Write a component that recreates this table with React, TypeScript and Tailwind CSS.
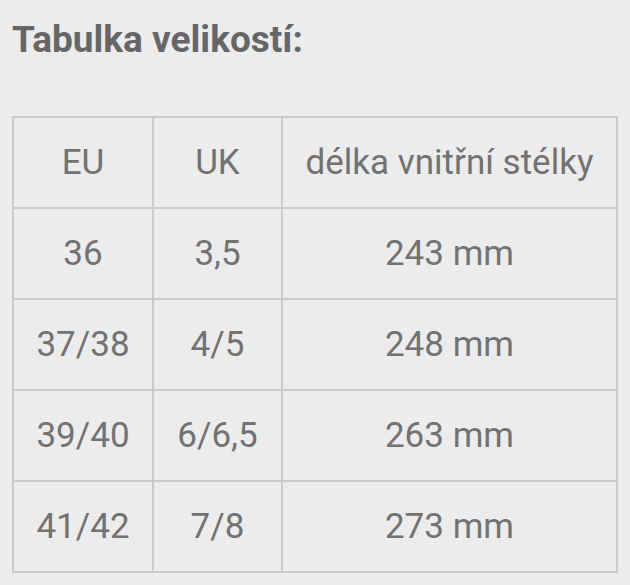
const ROWS: [string, string, string][] = [
  ["36", "3,5", "243 mm"],
  ["37/38", "4/5", "248 mm"],
  ["39/40", "6/6,5", "263 mm"],
  ["41/42", "7/8", "273 mm"],
];

const CELL = "border-2 border-[#cbcbcb] text-center align-middle h-[91px] p-0 font-normal";

export default function App() {
  return (
    <div className="w-[630px] h-[585px] bg-[#ececec] pl-[12px] pt-[18px] font-['Roboto',sans-serif] text-[#727272]">
      <h2 className="text-[37px] leading-[44px] font-bold text-[#666666] m-0">Tabulka velikostí:</h2>
      <table className="mt-[54px] border-collapse w-[606px] text-[35px] leading-none">
        <colgroup>
          <col className="w-[140px]" />
          <col className="w-[129px]" />
          <col />
        </colgroup>
        <thead>
          <tr>
            <th className={CELL}>EU</th>
            <th className={CELL}>UK</th>
            <th className={CELL}>délka vnitřní stélky</th>
          </tr>
        </thead>
        <tbody>
          {ROWS.map(r => (
            <tr key={r[0]}>
              {r.map((v, i) => (
                <td key={i} className={CELL}>{v}</td>
              ))}
            </tr>
          ))}
        </tbody>
      </table>
    </div>
  );
}
